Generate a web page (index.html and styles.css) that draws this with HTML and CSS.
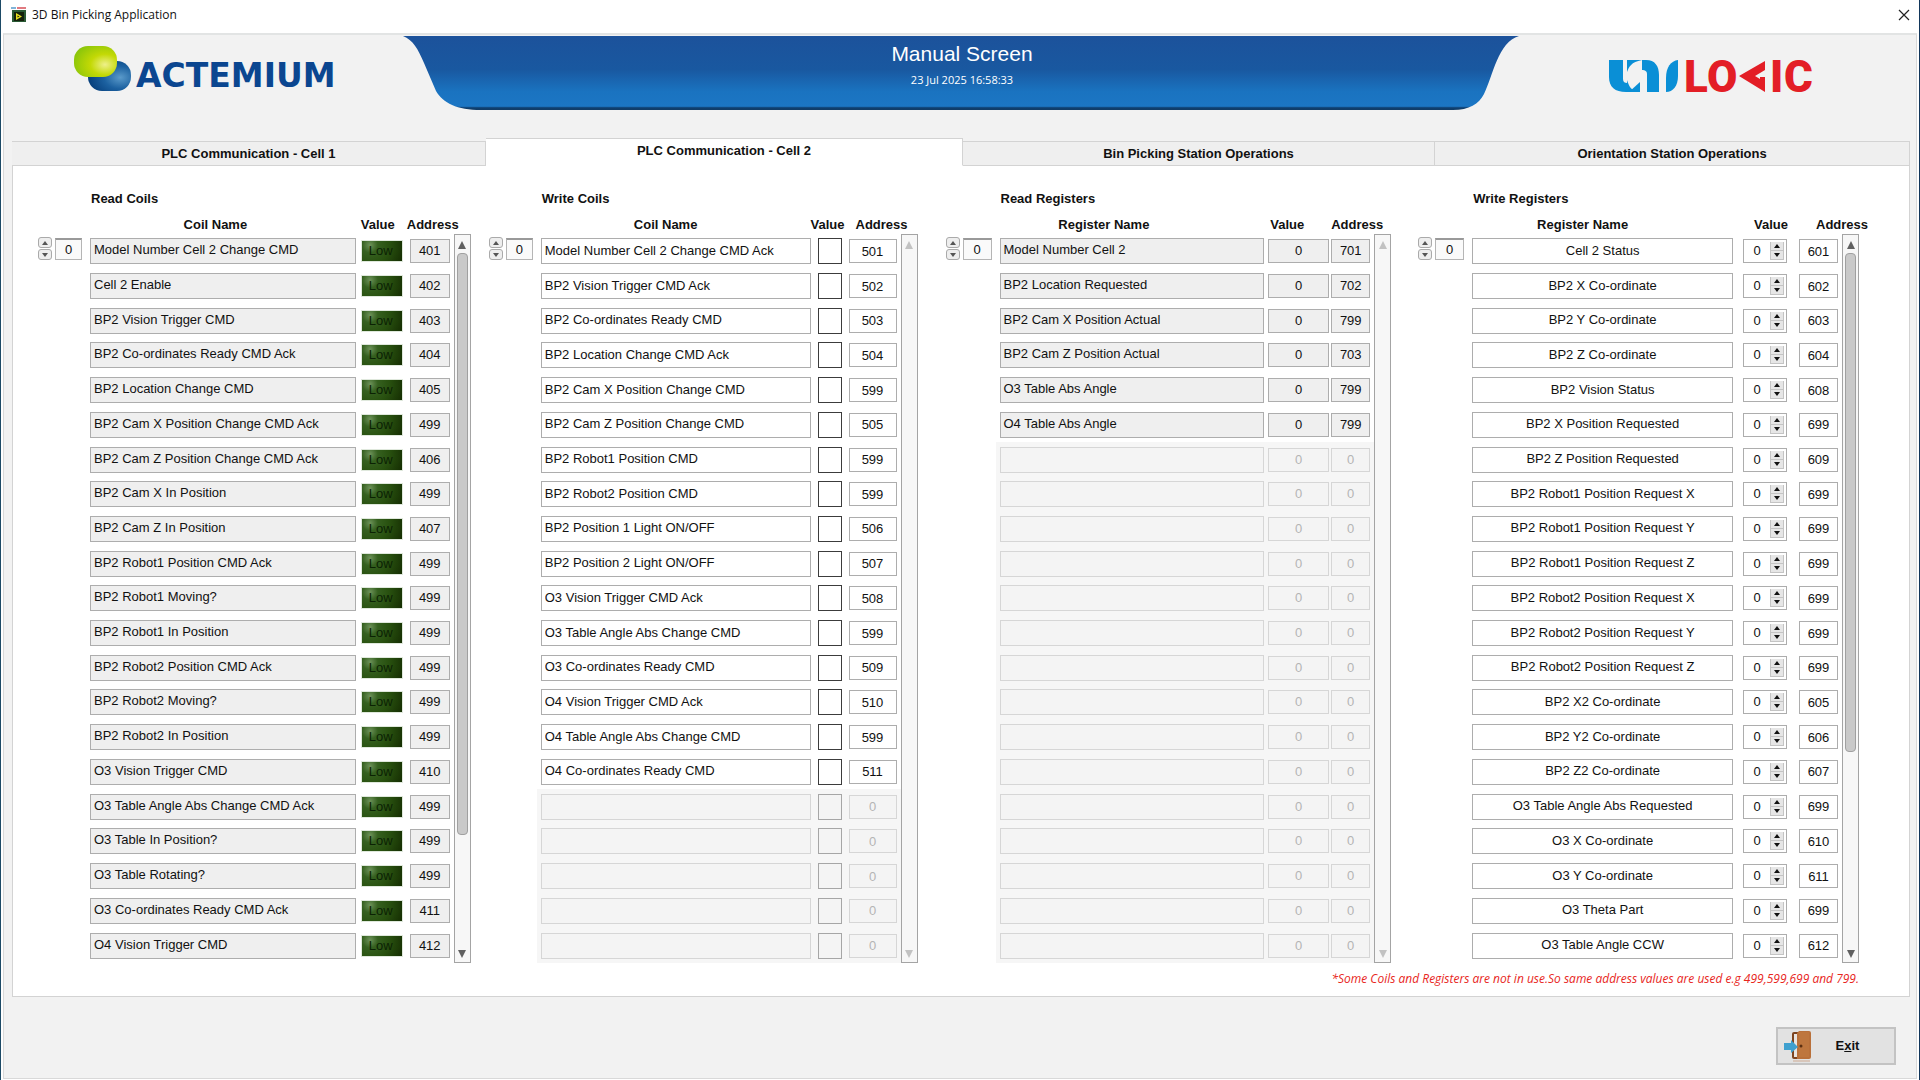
FILE: index.html
```html
<!DOCTYPE html>
<html lang="en">
<head>
<meta charset="utf-8">
<title>3D Bin Picking Application</title>
<link rel="stylesheet" href="styles.css">
</head>
<body>
<header class="titlebar">
  <svg class="app-icon" width="16" height="16" viewBox="0 0 16 16" aria-hidden="true">
    <path d="M0 1h5" stroke="#7fb4d8" stroke-width="2"/><path d="M6 1h9" stroke="#e07a80" stroke-width="2"/>
    <rect x="1" y="3" width="14" height="12" fill="#2a5a35"/>
    <rect x="3" y="5" width="10" height="9" fill="#14220c"/>
    <path d="M5 6l6 3.500-6 3.500z" fill="#e8e020"/><path d="M6.500 8.500l2 1-2 1z" fill="#14220c"/>
  </svg>
  <span class="app-name">3D Bin Picking Application</span>
  <button class="close" type="button" aria-label="Close">
    <svg width="12" height="12" viewBox="0 0 12 12"><path d="M1 1l10 10M11 1L1 11" stroke="#222" stroke-width="1.200" fill="none"/></svg>
  </button>
</header>

<main class="window">
  <div class="masthead">
    <svg class="logo-actemium" width="270" height="54" viewBox="0 0 270 54" role="img" aria-label="Actemium">
      <defs>
        <radialGradient id="lime" cx="0.72" cy="0.6" r="0.75"><stop offset="0" stop-color="#eef08a"/><stop offset="0.45" stop-color="#c3d905"/><stop offset="1" stop-color="#8cc60a"/></radialGradient>
        <radialGradient id="navy" cx="0.75" cy="0.55" r="0.75"><stop offset="0" stop-color="#5a9aca"/><stop offset="0.5" stop-color="#1c61a0"/><stop offset="1" stop-color="#063f7c"/></radialGradient>
      </defs>
      <rect x="14" y="15" width="43" height="30" rx="14" fill="url(#navy)"/>
      <rect x="0" y="0" width="43" height="31" rx="14" fill="url(#lime)"/>
      <text class="logo-word" x="62" y="41">ACTEMIUM</text>
    </svg>
    <div class="banner">
      <svg class="banner-shape" viewBox="0 0 1116 75" preserveAspectRatio="none" aria-hidden="true">
        <defs>
          <linearGradient id="blue" x1="0" y1="0" x2="0" y2="1"><stop offset="0" stop-color="#1c529b"/><stop offset="0.45" stop-color="#1958a0"/><stop offset="0.75" stop-color="#1a73c0"/><stop offset="0.95" stop-color="#1c76c4"/><stop offset="0.97" stop-color="#0e3f70"/><stop offset="1" stop-color="#123c66"/></linearGradient>
        </defs>
        <path d="M0 0C10 4 15 13 21 27L33 55C40 67 54 74 78 74H1050C1066 74 1076 68 1081 58C1090 40 1095 6 1116 0Z" fill="url(#blue)"/>
      </svg>
      <div class="banner-text">
        <h1>Manual Screen</h1>
        <time datetime="2025-07-23T16:58:33">23 Jul 2025 16:58:33</time>
      </div>
    </div>
    <svg class="logo-unilogic" width="203" height="60" viewBox="0 -12 203 60" role="img" aria-label="Unilogic">
      <g fill="#0a8fd6">
        <path d="M0 0H14V19C14 22 16 23 18 23V20C20 26 22 31 30 32H17C6 32 0 27 0 17Z"/>
        <path d="M18 0H33C22 2 20 7 18 12Z"/>
        <path d="M33 0H37C46 0 50 6 50 15V32H38V14C38 11 36 10 33 10Z"/>
        <path d="M20 32L31 22V32Z"/>
        <path d="M57 32V18C57 7 62 1 69 0V16C69 26 64 32 57 32Z"/>
      </g>
      <text class="logo-red" y="32" x="75 98 161 175">LOIC</text>
      <path d="M130 16L156 1V10L146 16L151 19L151 17H156V32Z" fill="#e31e26"/>
    </svg>
  </div>

  <nav class="tabs" role="tablist">
    <button type="button" role="tab" aria-selected="false">PLC Communication - Cell 1</button>
    <button type="button" role="tab" aria-selected="true" class="active">PLC Communication - Cell 2</button>
    <button type="button" role="tab" aria-selected="false">Bin Picking Station Operations</button>
    <button type="button" role="tab" aria-selected="false">Orientation Station Operations</button>
  </nav>

  <section class="panel" role="tabpanel">
    <div class="groups" id="groups"></div>
    <p class="note">*Some Coils and Registers are not in use.So same address values are used e.g 499,599,699 and 799.</p>
  </section>

  <footer class="footer">
    <button class="exit" type="button">
      <svg width="30" height="34" viewBox="0 0 30 34" aria-hidden="true">
        <rect x="9" y="3" width="10" height="27" rx="2" fill="#7d4420"/>
        <rect x="11" y="5" width="4" height="23" fill="#e9e4df"/>
        <path d="M14 4L16 2H26Q28 2 28 4V28Q28 30 26 30H14Z" fill="#b9703a"/>
        <path d="M16 3H26V28H16Z" fill="#c27a41" opacity="0.600"/>
        <circle cx="18" cy="17" r="1.500" fill="#5c3012"/>
        <path d="M1 14H8V11L15 18L8 24V21H1Z" fill="#3fa0cf"/>
        <path d="M10 32H27" stroke="#d8c6ba" stroke-width="2"/>
      </svg>
      <span>E<u>x</u>it</span>
    </button>
  </footer>
</main>
<script src="app.js"></script>
</body>
</html>
```
FILE: styles.css
```css
* { box-sizing: border-box; }

body {
  margin: 0;
  min-height: 100vh;
  display: flex;
  flex-direction: column;
  background: #fff;
  border-left: 1px solid #1d4a66;
  border-right: 1px solid #12365a;
  color: #111;
  font: 13px/18px "Liberation Sans", Arial, sans-serif;
}

button, input { font: inherit; color: inherit; }

h1, h2, p { margin: 0; }

/* Window title bar */
.titlebar {
  display: flex;
  align-items: center;
  height: 33px;
  padding: 0 7px 4px 10px;
}
.app-name {
  flex: 1;
  padding-left: 5px;
  font: 12px/16px "Open Sans", "Noto Sans", sans-serif;
}
.close {
  display: flex;
  padding: 2px;
  border: 0;
  background: none;
}

.window {
  flex: 1;
  display: flex;
  flex-direction: column;
  margin: 0 2px 1px;
  padding: 0 6px 0 8px;
  border: 1px solid #d9d9d9;
  border-top: 2px solid #e2e4e4;
  background: #f2f2f2;
}

/* Logos and banner */
.masthead {
  display: flex;
  justify-content: space-between;
  height: 103px;
  padding: 1px 98px 0 62px;
}
.logo-actemium { margin-top: 10px; }
.logo-word {
  font: bold 33px "DejaVu Sans", sans-serif;
  fill: #0b4690;
}
.banner {
  flex: 1;
  display: grid;
  margin: 0 90px 0 59px;
  height: 75px;
}
.banner > * { grid-area: 1 / 1; }
.banner-shape { width: 100%; height: 75px; }
.banner-text {
  z-index: 1;
  padding: 6px 0 0 2px;
  text-align: center;
  color: #fff;
}
.banner-text h1 { font-size: 21px; line-height: 24px; font-weight: normal; }
.banner-text time {
  display: block;
  padding-top: 5px;
  font: 11px/18px "Open Sans", "Noto Sans", sans-serif;
}
.logo-unilogic { margin-top: 12px; }
.logo-red { font: 900 44px Roboto, sans-serif; fill: #e31e26; }

/* Tabs */
.tabs {
  display: grid;
  grid-template-columns: 474fr 477fr 472fr 475fr;
  align-items: end;
  height: 28px;
}
.tabs button {
  height: 25px;
  margin: 0;
  padding: 0;
  border: 1px solid #d3d3d3;
  border-left: 0;
  background: #efefef;
  font-weight: bold;
}
.tabs .active {
  height: 28px;
  padding-bottom: 3px;
  background: #fff;
  border-bottom-color: #fff;
}

/* Panel */
.panel {
  flex: 1;
  display: flex;
  flex-direction: column;
  padding: 24px 50px 8px 25px;
  border: 1px solid #d3d3d3;
  border-top: 0;
  background: #fff;
}
.groups {
  flex: 1;
  display: grid;
  grid-template-columns: 451fr 457fr 473fr 441fr;
}
.group {
  display: grid;
  grid-template-columns: auto 1fr 17px;
  grid-template-rows: 26px 1fr;
}
.group-1 { padding-right: 18px; }
.group-2 { padding-right: 28px; }
.group-3 { padding-right: 27px; }

.group h2 {
  grid-column: 2 / 4;
  padding-left: 1px;
  font-size: 13px;
  line-height: 18px;
}

/* Array index control */
.index {
  grid-column: 1;
  display: flex;
  align-items: flex-start;
  gap: 3px;
  padding-top: 21px;
}
.index-arrows { display: grid; gap: 1px; }
.index-arrows button {
  display: grid;
  place-items: center;
  width: 14px;
  height: 11px;
  padding: 0;
  border: 1px solid #aaa;
  border-radius: 3px;
  background: #eee;
  color: #555;
}
.index input {
  width: 27px;
  height: 22px;
  margin: 1px 8px 0 0;
  padding: 0;
  border: 1px solid #b5b5b5;
  border-top: 2px solid #999;
  background: #fafafa;
  text-align: center;
}
.group-3 .index input, .group-4 .index input { width: 29px; }

/* Data tables */
.data {
  width: 100%;
  height: 100%;
  table-layout: fixed;
  border-collapse: collapse;
}
.data th {
  height: 18px;
  padding: 0;
  line-height: 18px;
  text-align: left;
  white-space: nowrap;
}
.data th:first-child { text-align: center; padding-right: 20px; }
.data td { padding: 0; vertical-align: middle; }

.group-1 th:nth-child(2) { width: 46px; }
.group-1 th:nth-child(3) { width: 47px; }
.group-1 td:nth-child(1) { padding-right: 5px; }
.group-1 td:nth-child(2) { padding-right: 4px; }
.group-1 td:nth-child(3) { padding: 0 4px 0 3px; }

.group-2 th:nth-child(2) { width: 38px; }
.group-2 th:nth-child(3) { width: 52px; padding-left: 7px; }
.group-2 td:nth-child(2) { padding-left: 7px; }
.group-2 td:nth-child(3) { padding-right: 4px; }

.group-3 th:first-child { padding-right: 60px; }
.group-3 th:nth-child(2) { width: 63px; padding-left: 2px; }
.group-3 th:nth-child(3) { width: 43px; }
.group-3 td:nth-child(1) { padding-right: 4px; }
.group-3 td:nth-child(2) { padding-right: 2px; }
.group-3 td:nth-child(3) { padding-right: 4px; }

.group-4 th:first-child { padding-right: 50px; }
.group-4 th:nth-child(2) { width: 56px; padding-left: 11px; }
.group-4 th:nth-child(3) { width: 43px; padding-left: 17px; }
.group-4 td:nth-child(1) { padding-right: 10px; }
.group-4 td:nth-child(2) { padding-right: 12px; }
.group-4 td:nth-child(3) { padding-right: 4px; }

.field {
  display: block;
  width: 100%;
  height: 26px;
  margin: 0;
  padding: 0 3px 2px;
  border: 1px solid #adadad;
  border-radius: 0;
  background: #fff;
  line-height: 22px;
  text-align: left;
  white-space: nowrap;
  overflow: hidden;
}
.field.num { height: 24px; padding: 0; text-align: center; }
.field.readonly { background: #efefef; }
.group-4 .name { text-align: center; }

/* Register headings sit left of the middle of their wide name column */
.group-3 th:first-child { text-align: center; }

.led {
  display: block;
  width: 100%;
  height: 22px;
  padding-left: 7px;
  border: 1px solid #dfe8dc;
  background: radial-gradient(circle at 20% 20%, #6d9259 0, #35601f 22%, #28500f 55%, #152d02 100%);
  color: #0b2204;
  line-height: 20px;
}

.check {
  display: block;
  appearance: none;
  width: 24px;
  height: 26px;
  margin: 0;
  border: 1px solid #3c3c3c;
  background: #fff;
}

.stepper {
  display: flex;
  align-items: center;
  height: 24px;
  padding-right: 2px;
  border: 1px solid #adadad;
  background: #fff;
}
.stepper input {
  flex: 1;
  min-width: 0;
  padding: 0;
  border: 0;
  background: none;
  text-align: center;
}
.stepper-arrows { display: grid; background: #e3e3e3; }
.stepper button {
  display: grid;
  place-items: center;
  width: 14px;
  height: 9px;
  padding: 0;
  border: 1px solid #c4c4c4;
  border-top: 0;
  background: #e6e6e6;
  color: #111;
}

/* Rows past the end of the array */
.empty td { background: #f6f6f6; }
.empty td:first-child { box-shadow: -4px 0 #f6f6f6; }
.empty .field { background: #f4f4f4; border-color: #d6d6d6; color: #b4b4b4; }
.empty .check { background: #f4f4f4; border-color: #a6a6a6; }

/* Scrollbar */
.scroll {
  display: flex;
  flex-direction: column;
  align-items: center;
  margin-top: 18px;
  padding: 6px 0 4px;
  border: 1px solid #a4a4a4;
  background: #f7f7f7;
  color: #606060;
}
.scroll.off { color: #c2c2c2; }
.track { flex: 1; width: 11px; margin: 4px 0; }
.thumb {
  border: 1px solid #a0a0a0;
  border-radius: 4px;
  background: #c9c9c9;
}

.note {
  padding-top: 7px;
  color: #e8261c;
  font: italic 12px/18px "Open Sans", "Noto Sans", sans-serif;
  text-align: right;
}

/* Footer */
.footer {
  display: flex;
  justify-content: flex-end;
  height: 81px;
  padding: 30px 14px 0;
}
.exit {
  display: flex;
  align-items: center;
  width: 120px;
  height: 38px;
  padding: 0 12px 0 5px;
  border: 2px solid #c3c3c3;
  background: #e2e2e2;
  font-weight: bold;
}
.exit span { flex: 1; text-align: center; }
```
FILE: app.js
```js
const ROWS = 21;

const groups = [
  {
    title: "Read Coils", nameHead: "Coil Name", kind: "led", thumb: 84,
    rows: [
      ["Model Number Cell 2 Change CMD", 401], ["Cell 2 Enable", 402], ["BP2 Vision Trigger CMD", 403],
      ["BP2 Co-ordinates Ready CMD Ack", 404], ["BP2 Location Change CMD", 405],
      ["BP2 Cam X Position Change CMD Ack", 499], ["BP2 Cam Z Position Change CMD Ack", 406],
      ["BP2 Cam X In Position", 499], ["BP2 Cam Z In Position", 407], ["BP2 Robot1 Position CMD Ack", 499],
      ["BP2 Robot1 Moving?", 499], ["BP2 Robot1 In Position", 499], ["BP2 Robot2 Position CMD Ack", 499],
      ["BP2 Robot2 Moving?", 499], ["BP2 Robot2 In Position", 499], ["O3 Vision Trigger CMD", 410],
      ["O3 Table Angle Abs Change CMD Ack", 499], ["O3 Table In Position?", 499], ["O3 Table Rotating?", 499],
      ["O3 Co-ordinates Ready CMD Ack", 411], ["O4 Vision Trigger CMD", 412]
    ]
  },
  {
    title: "Write Coils", nameHead: "Coil Name", kind: "check", thumb: 0,
    rows: [
      ["Model Number Cell 2 Change CMD Ack", 501], ["BP2 Vision Trigger CMD Ack", 502],
      ["BP2 Co-ordinates Ready CMD", 503], ["BP2 Location Change CMD Ack", 504],
      ["BP2 Cam X Position Change CMD", 599], ["BP2 Cam Z Position Change CMD", 505],
      ["BP2 Robot1 Position CMD", 599], ["BP2 Robot2 Position CMD", 599],
      ["BP2 Position 1 Light ON/OFF", 506], ["BP2 Position 2 Light ON/OFF", 507],
      ["O3 Vision Trigger CMD Ack", 508], ["O3 Table Angle Abs Change CMD", 599],
      ["O3 Co-ordinates Ready CMD", 509], ["O4 Vision Trigger CMD Ack", 510],
      ["O4 Table Angle Abs Change CMD", 599], ["O4 Co-ordinates Ready CMD", 511]
    ]
  },
  {
    title: "Read Registers", nameHead: "Register Name", kind: "number", thumb: 0,
    rows: [
      ["Model Number Cell 2", 701], ["BP2 Location Requested", 702], ["BP2 Cam X Position Actual", 799],
      ["BP2 Cam Z Position Actual", 703], ["O3 Table Abs Angle", 799], ["O4 Table Abs Angle", 799]
    ]
  },
  {
    title: "Write Registers", nameHead: "Register Name", kind: "stepper", thumb: 72,
    rows: [
      ["Cell 2 Status", 601], ["BP2 X Co-ordinate", 602], ["BP2 Y Co-ordinate", 603], ["BP2 Z Co-ordinate", 604],
      ["BP2 Vision Status", 608], ["BP2 X Position Requested", 699], ["BP2 Z Position Requested", 609],
      ["BP2 Robot1 Position Request X", 699], ["BP2 Robot1 Position Request Y", 699],
      ["BP2 Robot1 Position Request Z", 699], ["BP2 Robot2 Position Request X", 699],
      ["BP2 Robot2 Position Request Y", 699], ["BP2 Robot2 Position Request Z", 699],
      ["BP2 X2 Co-ordinate", 605], ["BP2 Y2 Co-ordinate", 606], ["BP2 Z2 Co-ordinate", 607],
      ["O3 Table Angle Abs Requested", 699], ["O3 X Co-ordinate", 610], ["O3 Y Co-ordinate", 611],
      ["O3 Theta Part", 699], ["O3 Table Angle CCW", 612]
    ]
  }
];

const arrow = (dir, w, h) =>
  `<svg width="${w}" height="${h}" viewBox="0 0 8 8" preserveAspectRatio="none" aria-hidden="true"><path fill="currentColor" d="${dir === "up" ? "M4 0L8 8H0Z" : "M4 8L0 0H8Z"}"/></svg>`;

const arrowButtons = (cls, label, w, h) =>
  `<span class="${cls}"><button type="button" aria-label="Increase ${label}">${arrow("up", w, h)}</button>` +
  `<button type="button" aria-label="Decrease ${label}">${arrow("down", w, h)}</button></span>`;

function field(cls, value, label, writable, disabled) {
  return writable
    ? `<input class="field ${cls}" value="${value}" aria-label="${label}"${disabled ? " disabled" : ""}>`
    : `<span class="field readonly ${cls}">${value}</span>`;
}

function valueCell(kind, label, disabled) {
  if (kind === "led") return `<span class="led">Low</span>`;
  if (kind === "check") return `<input class="check" type="checkbox" aria-label="${label} value"${disabled ? " disabled" : ""}>`;
  if (kind === "number") return field("num", 0, label, false);
  return `<span class="stepper"><input value="0" inputmode="numeric" aria-label="${label} value">${arrowButtons("stepper-arrows", label, 6, 4)}</span>`;
}

function groupHtml(group, i) {
  const writable = group.kind === "check" || group.kind === "stepper";
  let body = "";
  for (let r = 0; r < ROWS; r++) {
    const row = group.rows[r];
    const [name, address] = row || ["", 0];
    const label = name || `Element ${r}`;
    body += `<tr${row ? "" : ' class="empty"'}><td>${field("name", name, `${label} name`, writable, !row)}</td>` +
      `<td>${valueCell(group.kind, label, !row)}</td>` +
      `<td>${field("num", address, `${label} address`, writable, !row)}</td></tr>`;
  }
  return `<section class="group group-${i + 1}"><h2>${group.title}</h2>` +
    `<div class="index">${arrowButtons("index-arrows", `${group.title} index`, 6, 4)}<input value="0" inputmode="numeric" aria-label="${group.title} index"></div>` +
    `<table class="data"><thead><tr><th>${group.nameHead}</th><th>Value</th><th>Address</th></tr></thead><tbody>${body}</tbody></table>` +
    `<div class="scroll${group.thumb ? "" : " off"}">${arrow("up", 8, 8)}<div class="track">` +
    (group.thumb ? `<div class="thumb" style="height:${group.thumb}%"></div>` : "") +
    `</div>${arrow("down", 8, 8)}</div></section>`;
}

document.getElementById("groups").innerHTML = groups.map(groupHtml).join("");
```
